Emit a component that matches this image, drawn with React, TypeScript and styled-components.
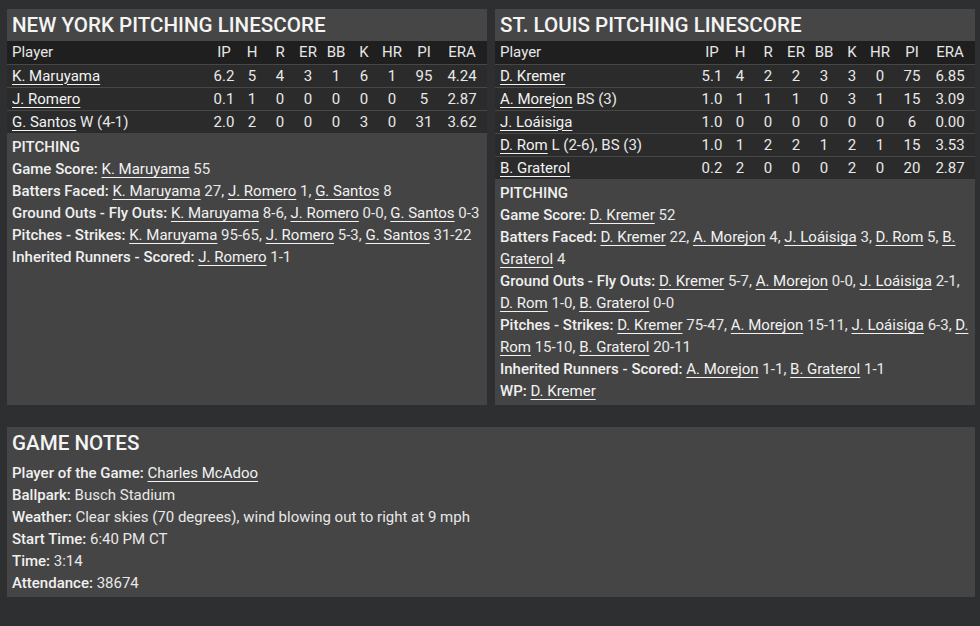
import React from "react";
import styled, { createGlobalStyle } from "styled-components";

const GlobalStyle = createGlobalStyle`
  html, body { margin: 0; padding: 0; }
  body {
    background: #2e2f30;
    font-family: Roboto, "Liberation Sans", sans-serif;
    color: #ececec;
    width: 980px;
    height: 626px;
    overflow: hidden;
  }
`;

const Page = styled.div`
  padding: 9px 5px 0 7px;
  display: flex;
  flex-direction: column;
  gap: 22px;
`;

const TopGrid = styled.div`
  display: grid;
  grid-template-columns: 480px 480px;
  gap: 8px;
  align-items: stretch;
`;

const Panel = styled.section`
  background: #444444;
  display: flex;
  flex-direction: column;
`;

const PanelTitle = styled.h2`
  margin: 0;
  height: 32px;
  line-height: 32px;
  padding: 0 5px;
  font-size: 20.6px;
  font-weight: 500;
  color: #f4f4f4;
  background: #464646;
  white-space: nowrap;
`;

const StatRow = styled.div<{ $head?: boolean }>`
  display: grid;
  grid-template-columns: 1fr repeat(7, 28px) 36px 40px;
  height: 23px;
  box-sizing: border-box;
  align-items: center;
  padding: 0 5px 1px;
  font-size: 15px;
  background: ${(p) => (p.$head ? "#1f1f1f" : "#2b2b2b")};
  border-top: ${(p) => (p.$head ? "none" : "1px solid #474747")};
  color: ${(p) => (p.$head ? "#e6e6e6" : "#e8e8e8")};
`;

const NameCell = styled.div`
  white-space: nowrap;
`;

const NumCell = styled.div`
  text-align: center;
`;

const Link = styled.a`
  color: #f2f2f2;
  text-decoration: underline;
  text-underline-offset: 3px;
  text-decoration-thickness: 1px;
  cursor: pointer;
`;

const Body = styled.div`
  padding: 3px 5px 3px;
  font-size: 15px;
  line-height: 22px;
  color: #e8e8e8;
`;

const Line = styled.div``;

const Label = styled.span`
  font-weight: 500;
  color: #f0f0f0;
`;

const NotesPanel = styled.section`
  width: 968px;
  background: #454545;
`;

const NotesTitle = styled.h2`
  margin: 0;
  height: 32px;
  line-height: 32px;
  padding: 0 5px;
  font-size: 20.6px;
  font-weight: 500;
  color: #f4f4f4;
`;

type Pitcher = {
  name: string;
  note?: string;
  stats: (string | number)[];
};

const cols = ["IP", "H", "R", "ER", "BB", "K", "HR", "PI", "ERA"];

const ny: Pitcher[] = [
  { name: "K. Maruyama", stats: ["6.2", 5, 4, 3, 1, 6, 1, 95, "4.24"] },
  { name: "J. Romero", stats: ["0.1", 1, 0, 0, 0, 0, 0, 5, "2.87"] },
  { name: "G. Santos", note: "W (4-1)", stats: ["2.0", 2, 0, 0, 0, 3, 0, 31, "3.62"] },
];

const stl: Pitcher[] = [
  { name: "D. Kremer", stats: ["5.1", 4, 2, 2, 3, 3, 0, 75, "6.85"] },
  { name: "A. Morejon", note: "BS (3)", stats: ["1.0", 1, 1, 1, 0, 3, 1, 15, "3.09"] },
  { name: "J. Loáisiga", stats: ["1.0", 0, 0, 0, 0, 0, 0, 6, "0.00"] },
  { name: "D. Rom", note: "L (2-6), BS (3)", stats: ["1.0", 1, 2, 2, 1, 2, 1, 15, "3.53"] },
  { name: "B. Graterol", stats: ["0.2", 2, 0, 0, 0, 2, 0, 20, "2.87"] },
];

type Entry = [string, string];

const StatLine: React.FC<{ label: string; entries: Entry[] }> = ({ label, entries }) => (
  <Line>
    <Label>{label}:</Label>{" "}
    {entries.map(([n, v], i) => (
      <React.Fragment key={i}>
        <Link>{n}</Link> {v}
        {i < entries.length - 1 ? ", " : ""}
      </React.Fragment>
    ))}
  </Line>
);

const Linescore: React.FC<{ title: string; pitchers: Pitcher[]; children: React.ReactNode }> = ({
  title,
  pitchers,
  children,
}) => (
  <Panel>
    <PanelTitle>{title}</PanelTitle>
    <StatRow $head>
      <NameCell>Player</NameCell>
      {cols.map((c) => (
        <NumCell key={c}>{c}</NumCell>
      ))}
    </StatRow>
    {pitchers.map((p) => (
      <StatRow key={p.name}>
        <NameCell>
          <Link>{p.name}</Link>
          {p.note ? ` ${p.note}` : ""}
        </NameCell>
        {p.stats.map((s, i) => (
          <NumCell key={i}>{s}</NumCell>
        ))}
      </StatRow>
    ))}
    <Body>{children}</Body>
  </Panel>
);

export default function App() {
  return (
    <>
      <GlobalStyle />
      <Page>
        <TopGrid>
          <Linescore title="NEW YORK PITCHING LINESCORE" pitchers={ny}>
            <Line>
              <Label>PITCHING</Label>
            </Line>
            <StatLine label="Game Score" entries={[["K. Maruyama", "55"]]} />
            <StatLine
              label="Batters Faced"
              entries={[
                ["K. Maruyama", "27"],
                ["J. Romero", "1"],
                ["G. Santos", "8"],
              ]}
            />
            <StatLine
              label="Ground Outs - Fly Outs"
              entries={[
                ["K. Maruyama", "8-6"],
                ["J. Romero", "0-0"],
                ["G. Santos", "0-3"],
              ]}
            />
            <StatLine
              label="Pitches - Strikes"
              entries={[
                ["K. Maruyama", "95-65"],
                ["J. Romero", "5-3"],
                ["G. Santos", "31-22"],
              ]}
            />
            <StatLine label="Inherited Runners - Scored" entries={[["J. Romero", "1-1"]]} />
          </Linescore>
          <Linescore title="ST. LOUIS PITCHING LINESCORE" pitchers={stl}>
            <Line>
              <Label>PITCHING</Label>
            </Line>
            <StatLine label="Game Score" entries={[["D. Kremer", "52"]]} />
            <StatLine
              label="Batters Faced"
              entries={[
                ["D. Kremer", "22"],
                ["A. Morejon", "4"],
                ["J. Loáisiga", "3"],
                ["D. Rom", "5"],
                ["B. Graterol", "4"],
              ]}
            />
            <StatLine
              label="Ground Outs - Fly Outs"
              entries={[
                ["D. Kremer", "5-7"],
                ["A. Morejon", "0-0"],
                ["J. Loáisiga", "2-1"],
                ["D. Rom", "1-0"],
                ["B. Graterol", "0-0"],
              ]}
            />
            <StatLine
              label="Pitches - Strikes"
              entries={[
                ["D. Kremer", "75-47"],
                ["A. Morejon", "15-11"],
                ["J. Loáisiga", "6-3"],
                ["D. Rom", "15-10"],
                ["B. Graterol", "20-11"],
              ]}
            />
            <StatLine
              label="Inherited Runners - Scored"
              entries={[
                ["A. Morejon", "1-1"],
                ["B. Graterol", "1-1"],
              ]}
            />
            <Line>
              <Label>WP:</Label> <Link>D. Kremer</Link>
            </Line>
          </Linescore>
        </TopGrid>
        <NotesPanel>
          <NotesTitle>GAME NOTES</NotesTitle>
          <Body>
            <Line>
              <Label>Player of the Game:</Label> <Link>Charles McAdoo</Link>
            </Line>
            <Line>
              <Label>Ballpark:</Label> Busch Stadium
            </Line>
            <Line>
              <Label>Weather:</Label> Clear skies (70 degrees), wind blowing out to right at 9 mph
            </Line>
            <Line>
              <Label>Start Time:</Label> 6:40 PM CT
            </Line>
            <Line>
              <Label>Time:</Label> 3:14
            </Line>
            <Line>
              <Label>Attendance:</Label> 38674
            </Line>
          </Body>
        </NotesPanel>
      </Page>
    </>
  );
}
